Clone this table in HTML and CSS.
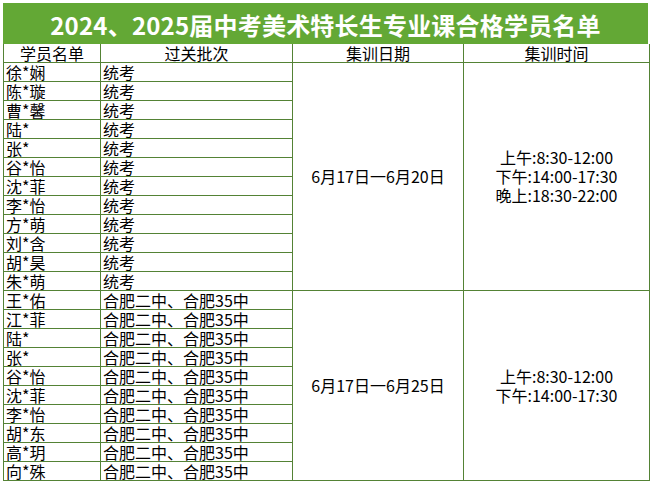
FILE: index.html
```html
<!DOCTYPE html>
<html lang="zh-CN">
<head>
<meta charset="utf-8">
<link rel="stylesheet" href="styles.css">
</head>
<body>
<div class="sheet">
  <div class="title">2024、2025届中考美术特长生专业课合格学员名单</div>
  <table class="grid">
    <colgroup>
      <col class="c1"><col class="c2"><col class="c3"><col class="c4">
    </colgroup>
    <tr class="head"><td>学员名单</td><td>过关批次</td><td>集训日期</td><td>集训时间</td></tr>
    <tr><td>徐*娴</td><td>统考</td><td class="merge" rowspan="12">6月17日一6月20日</td><td class="merge" rowspan="12">上午:8:30-12:00<br>下午:14:00-17:30<br>晚上:18:30-22:00</td></tr>
    <tr><td>陈*璇</td><td>统考</td></tr>
    <tr><td>曹*馨</td><td>统考</td></tr>
    <tr><td>陆*</td><td>统考</td></tr>
    <tr><td>张*</td><td>统考</td></tr>
    <tr><td>谷*怡</td><td>统考</td></tr>
    <tr><td>沈*菲</td><td>统考</td></tr>
    <tr><td>李*怡</td><td>统考</td></tr>
    <tr><td>方*萌</td><td>统考</td></tr>
    <tr><td>刘*含</td><td>统考</td></tr>
    <tr><td>胡*昊</td><td>统考</td></tr>
    <tr><td>朱*萌</td><td>统考</td></tr>
    <tr><td>王*佑</td><td>合肥二中、合肥35中</td><td class="merge" rowspan="10">6月17日一6月25日</td><td class="merge" rowspan="10">上午:8:30-12:00<br>下午:14:00-17:30</td></tr>
    <tr><td>江*菲</td><td>合肥二中、合肥35中</td></tr>
    <tr><td>陆*</td><td>合肥二中、合肥35中</td></tr>
    <tr><td>张*</td><td>合肥二中、合肥35中</td></tr>
    <tr><td>谷*怡</td><td>合肥二中、合肥35中</td></tr>
    <tr><td>沈*菲</td><td>合肥二中、合肥35中</td></tr>
    <tr><td>李*怡</td><td>合肥二中、合肥35中</td></tr>
    <tr><td>胡*东</td><td>合肥二中、合肥35中</td></tr>
    <tr><td>高*玥</td><td>合肥二中、合肥35中</td></tr>
    <tr><td>向*殊</td><td>合肥二中、合肥35中</td></tr>
  </table>
</div>
</body>
</html>
```

FILE: styles.css
```css
html, body {
  margin: 0;
  padding: 0;
  background: #ffffff;
}

.sheet {
  padding: 3px 0 0 3px;
  width: 646px;
}

.title {
  height: 41px;
  width: 645px;
  background: #63a835;
  color: #ffffff;
  font-family: "Noto Sans CJK SC", sans-serif;
  font-weight: bold;
  font-size: 24px;
  line-height: 43px;
  letter-spacing: 0.2px;
  text-align: center;
  white-space: nowrap;
}

.grid {
  border-collapse: collapse;
  table-layout: fixed;
  width: 646px;
  font-family: "Noto Sans CJK SC", sans-serif;
  font-size: 16px;
  color: #000000;
}

.c1 { width: 97px; }
.c2 { width: 192px; }
.c3 { width: 171px; }
.c4 { width: 186px; }

.grid td {
  border: 1px solid #548235;
  padding: 0 0 0 2px;
  height: 18px;
  line-height: 18px;
  white-space: nowrap;
  vertical-align: middle;
}

.grid tr.head td {
  border-top: none;
  text-align: center;
  padding: 0;
}

.grid td.merge {
  text-align: center;
  padding: 0;
  line-height: 19px;
}
```
